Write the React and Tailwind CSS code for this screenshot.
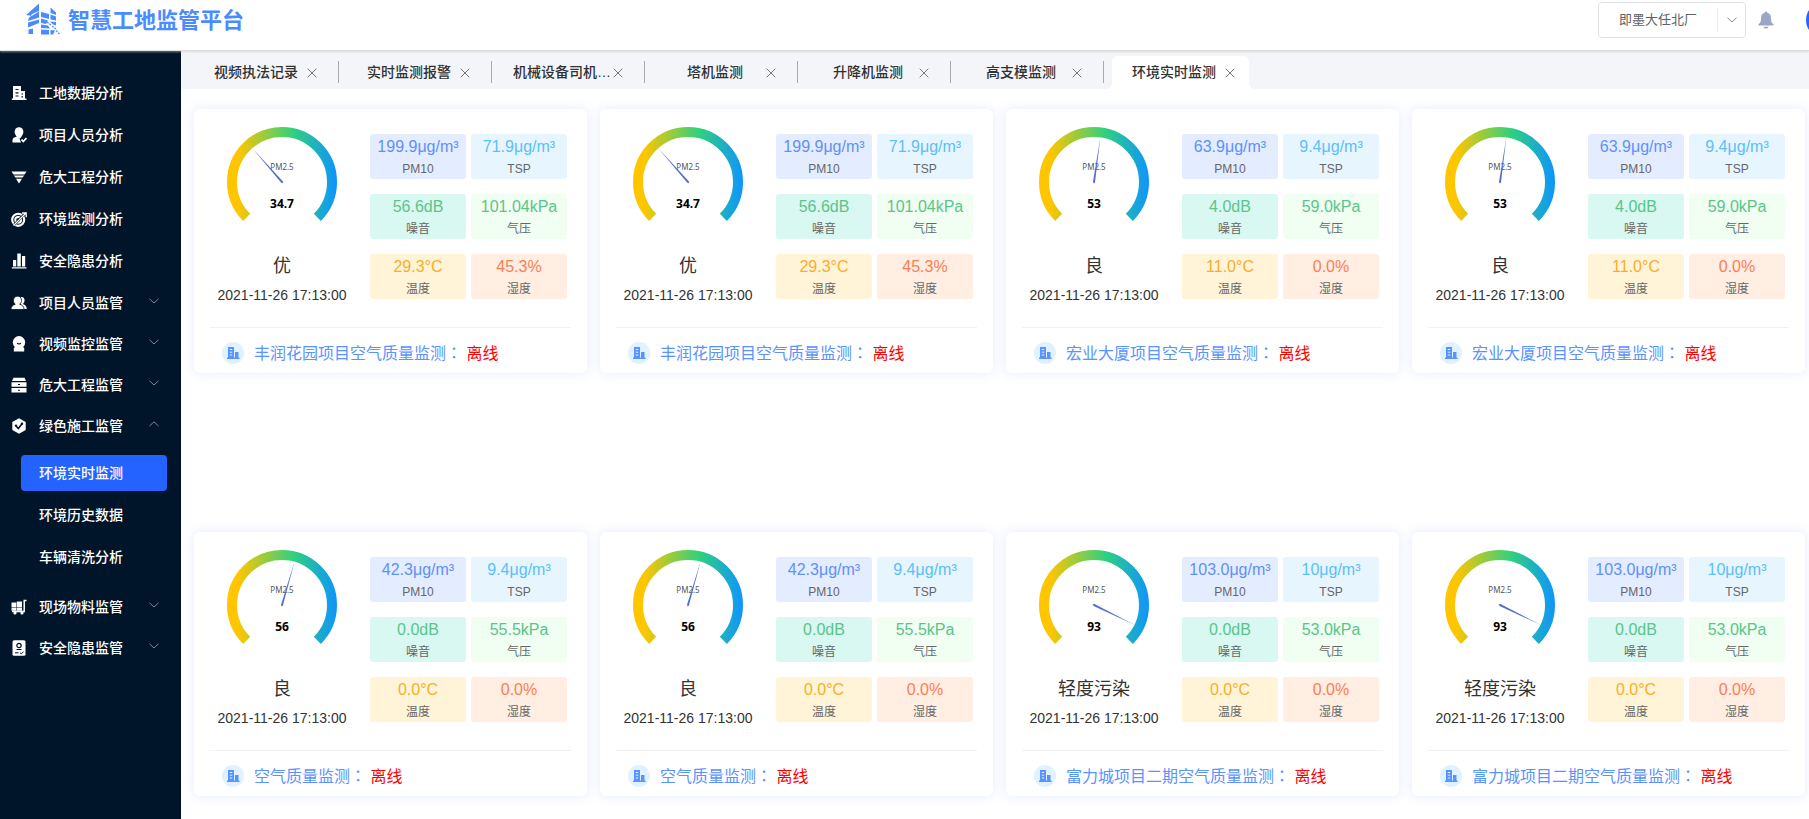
import { useState } from "react";

const LogoMark = () => (
  <svg viewBox="0 0 34 32" className="h-8 w-[34px] shrink-0" fill="#4a8cff">
    <path d="M0 12 L13 .5 V8 L6 11 L4 14 V12.500Z" />
    <path d="M3 14.500 L13 8.500 V14.500 L2 18Z" />
    <path d="M2 19.500 L13 16.500 V20 L2 24.500Z" />
    <path d="M2.500 26.500 L7 25.500 V31 H2.500Z" />
    <path d="M24.500 4.500 L30 9.500 V12 L24.500 10Z" />
    <path d="M15 9 L23 11 V16 L15 14Z" />
    <path d="M24.500 11.500 L30 13.500 V17.500 L24.500 16.500Z" />
    <path d="M15 15.500 L22 17.500 L20 21 L15 20Z" />
    <path d="M24 18.500 L30 19 V22.500 L27 21.500Z" />
    <path d="M15 21.500 L22 22.500 L24 25.500 L15 25Z" />
    <path d="M15 26.500 L23 27 V31.500 H15Z" />
    <path d="M24.500 27 L29 27.500 L27 31.500 H24.500Z" />
    <path d="M21 19 l4 3 M26 23 l4 3 M30 27.500 l4 4" stroke="#4a8cff" strokeWidth="1.200" strokeDasharray="2 1" />
  </svg>
);

const icons = {
  building: (
    <>
      <path d="M2 1h8v5h4v7.500h1.500v1.500H.8v-1.500H2z" />
      <path d="M4.500 4.500h3M4.500 7.800h3M4.500 11h3M10.500 9h1.500M10.500 11.800h1.500" stroke="#001529" strokeWidth="1.200" />
    </>
  ),
  personCheck: (
    <>
      <ellipse cx="8" cy="5" rx="4.400" ry="4.800" />
      <path d="M5.500 8.500h5V10L8.500 11.500l1.500 4H1.500v-2.500c0-1.800 1.800-2.800 4-3.200z" />
      <path d="M10.500 12.500l1.800 2L15.500 11" fill="none" stroke="#fff" strokeWidth="1.800" />
    </>
  ),
  funnel: (
    <>
      <path d="M.5 2.500h15L8 14.500z" />
      <path d="M2 6h12M4 9.200h8" stroke="#001529" strokeWidth="1.200" />
    </>
  ),
  target: (
    <g fill="none" stroke="#fff">
      <circle cx="7.200" cy="8.800" r="6" strokeWidth="2.200" />
      <circle cx="7.200" cy="8.800" r="2.900" strokeWidth="2" />
      <path d="M3 14L14 2.500" stroke="#001529" strokeWidth="2.500" />
      <path d="M2.500 14.500L15 2M11 2h4.200v4.200" strokeWidth="1.300" />
    </g>
  ),
  bars: <path d="M2 7h3.200v6.500H2zM6.300.500h3.500v13H6.300zM11 3h3.200v10.500H11zM.8 14.200h14.700v1.200H.8z" />,
  people: (
    <>
      <path d="M9.500 2c3-.5 4.500 1.500 4 4-.2 1.400-1 2.300-1.700 3 2.300.8 3.900 2 4 5h-3.500l-2.500-5z" />
      <path
        d="M6.500 1.200c2.600 0 4 1.800 4 4.200 0 1.700-.8 3-1.800 3.800 2.600.8 4.300 2.200 4.300 5.300H0c0-3 1.800-4.500 4.300-5.300C3.200 8.400 2.500 7.100 2.500 5.400c0-2.400 1.500-4.200 4-4.200z"
        stroke="#001529"
        strokeWidth=".8"
      />
    </>
  ),
  camera: (
    <>
      <circle cx="8" cy="6.300" r="6.200" />
      <path d="M4.500 10h7l1.700 2.500v3H2.800v-3z" />
      <path d="M6.200 7c.6 1.200 3 1.200 3.600 0" fill="none" stroke="#001529" strokeWidth="1.100" />
    </>
  ),
  drawers: (
    <>
      <path d="M2.500.800h11L15 4H1z" />
      <path d="M.5 5.200h15v4.600H.5zM.5 11h15v4.500H.5z" />
      <path d="M7 7.500h2M7 13.200h2" stroke="#001529" strokeWidth="1.100" />
    </>
  ),
  hexCheck: (
    <>
      <path d="M8 .3l6.700 3.800v7.800L8 15.700l-6.700-3.800V4.100z" />
      <path d="M5 8l2.300 2.500 4-5" fill="none" stroke="#001529" strokeWidth="1.600" />
      <circle cx="5" cy="7.600" r="1.200" fill="#001529" />
      <circle cx="11" cy="5.800" r="1.200" fill="#001529" />
    </>
  ),
  trolley: (
    <>
      <path d="M.5 3.500h4.800V8H.5zM5.800 2.500H11V8H5.800zM.5 8.500h4.800v3.300H.5zM5.800 8.500H11v3.300H5.800z" />
      <path d="M15.500 1.500h-2.300v11H1" fill="none" stroke="#fff" strokeWidth="1.500" />
      <circle cx="4" cy="14" r="1.600" />
      <circle cx="11" cy="14" r="1.600" />
    </>
  ),
  record: (
    <>
      <rect x="1.500" y=".3" width="13" height="15.500" rx="1.500" />
      <g fill="none" stroke="#001529">
        <circle cx="8" cy="5.500" r="2.200" strokeWidth="1.200" />
        <path d="M5.500 9.500h5" strokeWidth="1" />
        <path d="M4 12.800h3.500M9 12.800l1.200 1 2.300-2" strokeWidth="1" />
      </g>
    </>
  ),
};

const SideIcon = ({ name }) => (
  <svg viewBox="0 0 16 16" className="size-4 shrink-0" fill="#fff">
    {icons[name]}
  </svg>
);

const Chevron = ({ up, className }) => (
  <svg viewBox="0 0 10 6" className={className} fill="none" stroke="currentColor" strokeWidth="1">
    <path d={up ? "M.5 5L5 .8 9.500 5" : "M.5 .8L5 5 9.500 .8"} />
  </svg>
);

const CloseIcon = () => (
  <svg viewBox="0 0 10 10" className="size-[10px]" fill="none" stroke="#777" strokeWidth="1">
    <path d="M.7.7l8.600 8.600M9.300.7L.7 9.300" />
  </svg>
);

const links = [
  { icon: "building", label: "工地数据分析" },
  { icon: "personCheck", label: "项目人员分析" },
  { icon: "funnel", label: "危大工程分析" },
  { icon: "target", label: "环境监测分析" },
  { icon: "bars", label: "安全隐患分析" },
];

const groups = [
  { icon: "people", label: "项目人员监管" },
  { icon: "camera", label: "视频监控监管" },
  { icon: "drawers", label: "危大工程监管" },
  {
    icon: "hexCheck",
    label: "绿色施工监管",
    children: ["环境实时监测", "环境历史数据", "车辆清洗分析"],
  },
  { icon: "trolley", label: "现场物料监管" },
  { icon: "record", label: "安全隐患监管" },
];

const tabs = ["视频执法记录", "实时监测报警", "机械设备司机…", "塔机监测", "升降机监测", "高支模监测", "环境实时监测"];

const stations = [
  { pm25: 34.7, level: "优", values: ["199.9μg/m³", "71.9μg/m³", "56.6dB", "101.04kPa", "29.3°C", "45.3%"], name: "丰润花园项目空气质量监测" },
  { pm25: 34.7, level: "优", values: ["199.9μg/m³", "71.9μg/m³", "56.6dB", "101.04kPa", "29.3°C", "45.3%"], name: "丰润花园项目空气质量监测" },
  { pm25: 53, level: "良", values: ["63.9μg/m³", "9.4μg/m³", "4.0dB", "59.0kPa", "11.0°C", "0.0%"], name: "宏业大厦项目空气质量监测" },
  { pm25: 53, level: "良", values: ["63.9μg/m³", "9.4μg/m³", "4.0dB", "59.0kPa", "11.0°C", "0.0%"], name: "宏业大厦项目空气质量监测" },
  { pm25: 56, level: "良", values: ["42.3μg/m³", "9.4μg/m³", "0.0dB", "55.5kPa", "0.0°C", "0.0%"], name: "空气质量监测" },
  { pm25: 56, level: "良", values: ["42.3μg/m³", "9.4μg/m³", "0.0dB", "55.5kPa", "0.0°C", "0.0%"], name: "空气质量监测" },
  { pm25: 93, level: "轻度污染", values: ["103.0μg/m³", "10μg/m³", "0.0dB", "53.0kPa", "0.0°C", "0.0%"], name: "富力城项目二期空气质量监测" },
  { pm25: 93, level: "轻度污染", values: ["103.0μg/m³", "10μg/m³", "0.0dB", "53.0kPa", "0.0°C", "0.0%"], name: "富力城项目二期空气质量监测" },
];

const metrics = [
  { label: "PM10", style: "bg-[#e4ecff] text-[#6090fa]" },
  { label: "TSP", style: "bg-[#e7f5ff] text-[#5bbff9]" },
  { label: "噪音", style: "bg-[#d9f8f1] text-[#5bc48c]" },
  { label: "气压", style: "bg-[#f0fff1] text-[#5bc48c]" },
  { label: "温度", style: "bg-[#fff4d8] text-[#f9ae28]" },
  { label: "湿度", style: "bg-[#ffeee1] text-[#ff7d55]" },
];

const Gauge = ({ value, id }) => {
  // 270 degree dial, 0 at lower left and 100 at lower right
  const rotation = -135 + (270 * value) / 100;

  return (
    <svg viewBox="0 0 120 120" className="size-[120px]">
      <defs>
        <linearGradient id={id} gradientUnits="userSpaceOnUse" x1="5" y1="0" x2="115" y2="0">
          <stop offset="0.1" stopColor="#ffc600" />
          <stop offset="0.6" stopColor="#30d17c" />
          <stop offset="1" stopColor="#0e94ff" />
        </linearGradient>
      </defs>
      <path d="M24.640 95.360A50 50 0 1 1 95.360 95.360" fill="none" stroke={`url(#${id})`} strokeWidth="10" />
      <text x="60" y="48" textAnchor="middle" className="font-['Noto_Sans',sans-serif] text-[8px]" fill="#555">
        PM2.5
      </text>
      <path d="M60 15L61 60L60 61.500L59 60Z" fill="#5470c6" transform={`rotate(${rotation} 60 60)`} />
      <text x="60" y="86" textAnchor="middle" className="font-['Noto_Sans',sans-serif] text-xs font-bold" fill="#000">
        {value}
      </text>
    </svg>
  );
};

const StationCard = ({ station, id }) => (
  <article className="rounded-md bg-white shadow-[0_0_12px_rgba(80,130,250,0.16)]">
    <div className="flex pb-[22px]">
      <div className="flex flex-1 flex-col items-center pt-[13px]">
        <Gauge value={station.pm25} id={id} />
        <p className="mt-[10px] text-lg leading-7 text-[#333]">{station.level}</p>
        <time className="mt-[5px] text-sm text-[#333]">2021-11-26 17:13:00</time>
      </div>
      <dl className="mr-5 grid w-[197px] grid-cols-2 content-start gap-x-[5px] gap-y-[15px] pt-[25px] text-center">
        {metrics.map((metric, i) => (
          <div key={metric.label} className={`flex h-[45px] flex-col-reverse rounded-[3px] ${metric.style}`}>
            <dt className="text-xs leading-5 text-[#666]">{metric.label}</dt>
            <dd className="text-base leading-6">{station.values[i]}</dd>
          </div>
        ))}
      </dl>
    </div>
    <div className="mx-4 flex items-center gap-[10px] border-t border-[#f1f2f4] pt-[14px] pb-[9px] pl-3">
      <span className="flex size-[22px] shrink-0 items-center justify-center rounded-full bg-[#e0f1ff]">
        <svg viewBox="0 0 14 14" className="size-[14px]" fill="#5993ff">
          <path d="M2 1h6v11H2zM9 6h3.500v6H9zM1 11.500h12.500V13H1z" />
          <path d="M3.800 3.500h2.400M3.800 6.200h2.400M3.800 9h2.400" stroke="#e0f1ff" strokeWidth="1" />
        </svg>
      </span>
      <h2 className="text-base leading-5 whitespace-nowrap text-[#5993ff]">
        {station.name}
        <span className="font-['Noto_Sans_CJK_TC',sans-serif]">：</span> <span className="text-[#ff0000]">离线</span>
      </h2>
    </div>
  </article>
);

const Header = () => (
  <header className="relative z-10 flex h-[51px] items-start justify-between overflow-x-clip border-b border-[#dcdcdc] bg-white shadow-[0_1px_2px_rgba(200,200,200,0.6)]">
    <div className="flex items-start gap-2 pt-[3px] pl-[26px]">
      <LogoMark />
      <h1 className="text-[22px] leading-9 font-bold whitespace-nowrap text-[#4a8cff]">智慧工地监管平台</h1>
    </div>
    <div className="mr-[-33px] flex items-center pt-[2px]">
      <div className="relative">
        <select
          aria-label="项目"
          className="h-9 w-[148px] appearance-none rounded border border-[#e0e2e6] bg-white pl-5 text-[13px] text-[#606266]"
        >
          <option>即墨大任北厂</option>
        </select>
        <span className="pointer-events-none absolute inset-y-[6px] right-0 flex w-[29px] items-center justify-center border-l border-[#e8eaee] text-[#888]">
          <Chevron className="h-[6px] w-[10px]" />
        </span>
      </div>
      <button type="button" aria-label="消息" className="ml-3">
        <svg viewBox="0 0 16 18" className="h-[18px] w-4" fill="#9ba6c4">
          <path d="M8 .5c.8 0 1.200.5 1.200 1.200C11.800 2.300 13 4.300 13 7c0 4 .8 5 2.500 6.300v1.200H.5v-1.200C2.200 12 3 11 3 7c0-2.700 1.200-4.700 3.800-5.300C6.800 1 7.200.5 8 .5z" />
          <path d="M5.500 15.700h5c-.4 1.300-1.300 1.800-2.500 1.800s-2.100-.5-2.500-1.800z" />
        </svg>
      </button>
      <button type="button" aria-label="账户" className="ml-8 size-9 shrink-0 rounded-full bg-[#2463ff]" />
    </div>
  </header>
);

const Sidebar = ({ page, setPage }) => {
  const [open, setOpen] = useState("绿色施工监管");

  return (
    <nav className="w-[181px] shrink-0 bg-[#001529] pt-[21px] text-sm font-medium text-white">
      {links.map((link) => (
        <a key={link.label} href="#" className="flex h-[42px] items-center gap-3 pl-[11px]">
          <SideIcon name={link.icon} />
          {link.label}
        </a>
      ))}
      {groups.map((group) => {
        const expanded = open === group.label;

        return (
          <div key={group.label}>
            <button
              type="button"
              aria-expanded={expanded}
              onClick={() => setOpen(expanded ? null : group.label)}
              className="flex h-[41px] w-full items-center gap-3 pr-[22px] pl-[11px]"
            >
              <SideIcon name={group.icon} />
              {group.label}
              <Chevron up={expanded} className="mb-1 ml-auto h-[6px] w-[10px] text-[#7d8893]" />
            </button>
            {expanded && group.children && (
              <ul className="flex flex-col gap-[6px] pt-[9px] pr-[14px] pb-[11px] pl-[21px]">
                {group.children.map((child) => (
                  <li key={child}>
                    <a
                      href="#"
                      onClick={() => setPage(child)}
                      className={`flex h-9 items-center rounded pl-[18px] ${page === child ? "bg-[#2463ff]" : ""}`}
                    >
                      {child}
                    </a>
                  </li>
                ))}
              </ul>
            )}
          </div>
        );
      })}
    </nav>
  );
};

const TabBar = ({ page, setPage }) => (
  <div className="flex h-[38px] items-end bg-[#f4f5f9] pl-[5px]">
    {tabs.map((tab) => {
      const active = page === tab;

      return (
        <div
          key={tab}
          className={
            active
              ? "relative ml-2 flex h-[33px] w-[137px] items-center rounded-t-md bg-white pl-5"
              : "flex h-[33px] w-[153px] items-center pl-5 bg-[linear-gradient(#aaa,#aaa)] bg-[length:1px_22px] bg-[position:right_5px] bg-no-repeat"
          }
        >
          <button
            type="button"
            onClick={() => setPage(tab)}
            className={`pb-[2px] text-center text-sm font-medium whitespace-nowrap text-[#303133] ${active ? "mr-2" : "w-[100px]"}`}
          >
            {tab}
          </button>
          <button type="button" aria-label={`关闭${tab}`} className="ml-[1px]">
            <CloseIcon />
          </button>
          {active && (
            <>
              <span className="absolute bottom-0 -left-[6px] size-[6px] bg-[radial-gradient(circle_at_0_0,transparent_6px,white_6px)]" />
              <span className="absolute -right-[6px] bottom-0 size-[6px] bg-[radial-gradient(circle_at_100%_0,transparent_6px,white_6px)]" />
            </>
          )}
        </div>
      );
    })}
  </div>
);

const App = () => {
  const [page, setPage] = useState("环境实时监测");

  return (
    <div className="flex min-h-screen flex-col bg-white font-['Liberation_Sans','Noto_Sans_CJK_SC',sans-serif]">
      <Header />
      <div className="flex flex-1">
        <Sidebar page={page} setPage={setPage} />
        <main className="min-w-0 flex-1">
          <TabBar page={page} setPage={setPage} />
          <div className="grid grid-cols-4 gap-x-[13px] gap-y-[159px] pt-5 pr-1 pb-[22px] pl-[13px]">
            {stations.map((station, i) => (
              <StationCard key={i} station={station} id={`dial-${i}`} />
            ))}
          </div>
        </main>
      </div>
    </div>
  );
};

export default App;
